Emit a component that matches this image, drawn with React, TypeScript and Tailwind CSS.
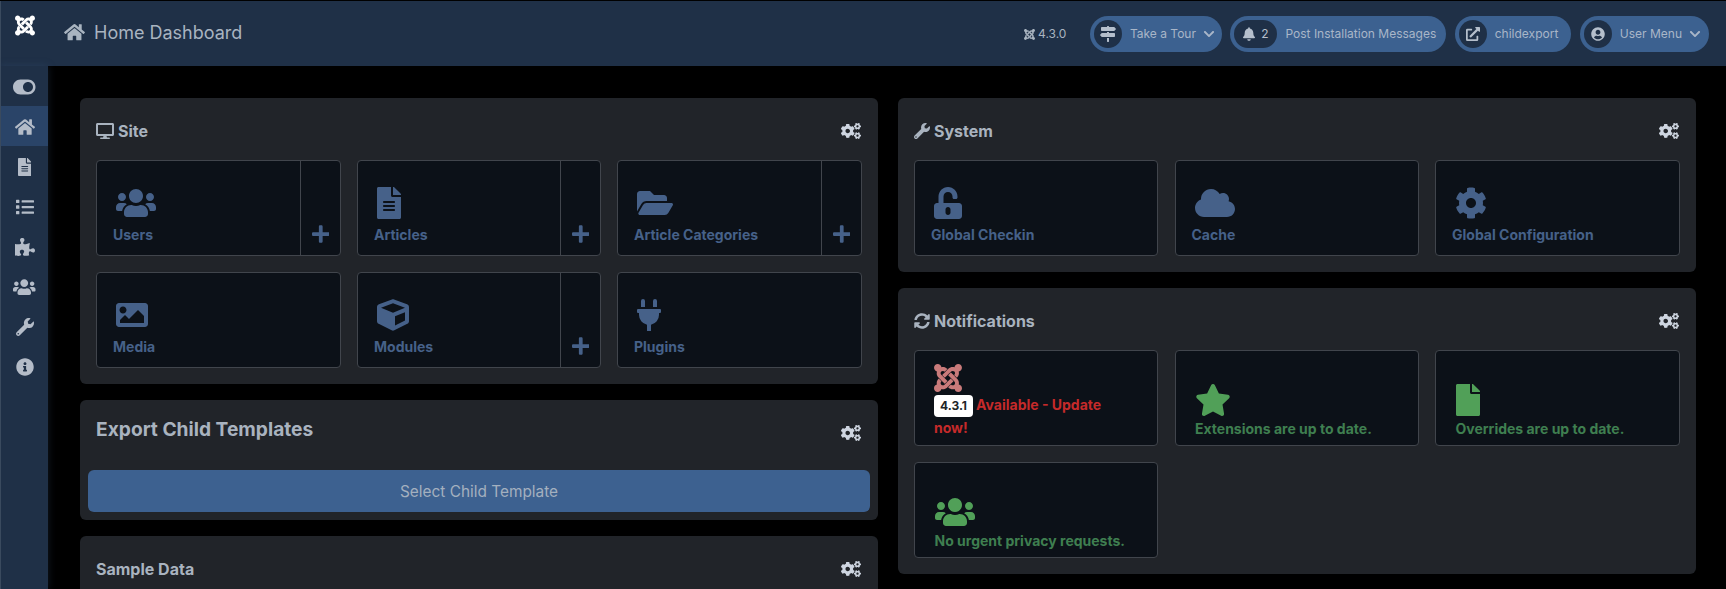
import React from 'react'
import {
  FaBell, FaChevronDown, FaCloud, FaCog, FaCogs, FaCube, FaDesktop, FaExternalLinkAlt, FaFile, FaFileAlt,
  FaFolderOpen, FaHome, FaImage, FaInfoCircle, FaJoomla, FaList, FaMapSigns, FaPlug, FaPlus, FaPuzzlePiece, FaStar,
  FaSyncAlt, FaToggleOn, FaUnlockAlt, FaUserCircle, FaUsers, FaWrench,
} from 'react-icons/fa'

const Gears = () => <FaCogs className='w-5 h-4 mr-px text-[#ced5e0] shrink-0' />

const Panel = ({ icon, title, children }: { icon?: React.ReactNode; title: string; children?: React.ReactNode }) => (
    <section className='bg-[#212429] rounded-md px-4 pb-4'>
        <div className='flex justify-between items-center pt-[21px] pb-[17px] h-[62px]'>
            <h2 className='flex items-center gap-1 text-[16px] leading-6 font-bold text-[#a9b3bf]'>{icon}{title}</h2>
            <Gears />
        </div>
        {children}
    </section>
)

const Card = ({ icon, label, plus }: { icon: React.ReactNode; label: string; plus?: boolean }) => (
    <div className='h-24 flex bg-[#0c1118] border border-[#41454c] rounded text-[#466189]'>
        <div className='flex-1 flex flex-col justify-end pl-4 pb-[10px] min-w-0'>
            <div className='h-8 mb-[5px] ml-[3px] flex items-center text-[32px]'>{icon}</div>
            <div className='text-[14px] leading-[21px] font-bold'>{label}</div>
        </div>
        {plus && (
            <div className='w-10 border-l border-[#41454c] flex items-end justify-center pb-[11px] text-[20px]'>
                <FaPlus className='w-[17.5px]' />
            </div>
        )}
    </div>
)

const NoteCard = ({ icon, label }: { icon: React.ReactNode; label: string }) => (
    <div className='h-24 flex flex-col justify-end bg-[#0c1118] border border-[#41454c] rounded pl-[19.5px] pb-[6px]'>
        <div className='h-8 mb-[2px] flex items-center text-[32px] text-[#51a058]'>{icon}</div>
        <div className='text-[14px] leading-[21px] font-bold text-[#3f7f50]'>{label}</div>
    </div>
)

const Pill = ({ icon, circle, text, chevron, pr }: { icon: React.ReactNode; circle: string; text: string; chevron?: boolean; pr: string }) => (
    <div className={`h-9 flex items-center bg-[#3c6190] rounded-full pl-[4px] ${pr} text-[12px] text-[#a9b6c8]`}>
        <span className={`h-7 ${circle} flex items-center justify-center gap-[6px] rounded-full bg-[#1f3047] text-[#b5bfcc] text-[14px]`}>{icon}</span>
        <span className='ml-2 whitespace-nowrap'>{text}</span>
        {chevron && <FaChevronDown className='ml-[7px] text-[12px]' />}
    </div>
)

const SideItem = ({ children, active }: { children: React.ReactNode; active?: boolean }) => (
    <div className={`h-10 pt-[2px] flex items-center justify-center text-[18px] text-[#b4bcc8] ${active ? 'bg-[#2a4468]' : ''}`}>{children}</div>
)

const App = () => {
    return (
        <div className="h-[589px] overflow-hidden flex flex-col bg-black border-t border-black font-['Inter',sans-serif]">
            <header className='h-[65px] shrink-0 flex items-center bg-[#1f3047] border-l border-[#3a4a5e] pr-[17px]'>
                <div className='w-[47px] flex justify-center pb-[16px]'>
                    <FaJoomla className='w-5 h-[23px] text-white' />
                </div>
                <div className='flex items-center pl-4 text-[#a9b4c0] pb-[2px]'>
                    <FaHome className='w-[21px] h-[18.5px]' />
                    <h1 className='ml-[9px] text-[18px] leading-6'>Home Dashboard</h1>
                </div>
                <div className='ml-auto flex items-center gap-[8.5px] pt-px'>
                    <div className='flex items-center gap-[3px] mr-[15px] text-[12px] text-[#a9b4c0]'>
                        <FaJoomla className='w-[11px] h-[13px]' />4.3.0
                    </div>
                    <Pill icon={<FaMapSigns className='text-[16px]' />} circle='w-7' text='Take a Tour' chevron pr='pr-[7px]' />
                    <Pill icon={<><FaBell className='w-3' /><span className='text-[12px]'>2</span></>} circle='w-[43px]' text='Post Installation Messages' pr='pr-[10px]' />
                    <Pill icon={<FaExternalLinkAlt />} circle='w-7' text='childexport' pr='pr-[13px]' />
                    <Pill icon={<FaUserCircle />} circle='w-7' text='User Menu' chevron pr='pr-2' />
                </div>
            </header>

            <div className='flex-1 flex min-h-0'>
                <nav className='w-12 shrink-0 bg-[#1f3047] border-l border-[#3a4a5e] shadow-[0_0_8px_rgba(60,90,130,0.3)]'>
                    <SideItem><FaToggleOn className='w-[22.5px] h-5' /></SideItem>
                    <SideItem active><FaHome className='w-5' /></SideItem>
                    <SideItem><FaFileAlt className='w-[13.5px]' /></SideItem>
                    <SideItem><FaList /></SideItem>
                    <SideItem><FaPuzzlePiece className='w-5' /></SideItem>
                    <SideItem><FaUsers className='w-[22.5px]' /></SideItem>
                    <SideItem><FaWrench /></SideItem>
                    <SideItem><FaInfoCircle /></SideItem>
                </nav>

                <main className='flex-1 grid grid-cols-2 gap-x-5 items-start pl-8 pr-[30px] pt-8'>
                    <div className='flex flex-col gap-4'>
                        <Panel icon={<FaDesktop className='w-[18px]' />} title='Site'>
                            <div className='grid grid-cols-[245px_244px_245px] gap-x-4 gap-y-4'>
                                <Card icon={<FaUsers className='w-10' />} label='Users' plus />
                                <Card icon={<FaFileAlt className='w-6' />} label='Articles' plus />
                                <Card icon={<FaFolderOpen className='w-9' />} label='Article Categories' plus />
                                <Card icon={<FaImage />} label='Media' />
                                <Card icon={<FaCube />} label='Modules' plus />
                                <Card icon={<FaPlug className='w-6' />} label='Plugins' />
                            </div>
                        </Panel>

                        <section className='bg-[#212429] rounded-md px-2 pb-2'>
                            <div className='flex justify-between items-start px-2 h-[70px] pt-[14px]'>
                                <h2 className='text-[19.2px] leading-[30px] font-bold text-[#a9b3bf]'>Export Child Templates</h2>
                                <div className='pt-[11px]'><Gears /></div>
                            </div>
                            <div className='h-[42px] pt-px flex items-center justify-center rounded-md bg-[#3d6190] text-[15.4px] text-[#a4b0bf]'>Select Child Template</div>
                        </section>

                        <Panel title='Sample Data'>
                            <div className='h-16' />
                        </Panel>
                    </div>

                    <div className='flex flex-col gap-4'>
                        <Panel icon={<FaWrench />} title='System'>
                            <div className='grid grid-cols-[244px_244px_245px] gap-x-[16.5px]'>
                                <Card icon={<FaUnlockAlt className='w-7' />} label='Global Checkin' />
                                <Card icon={<FaCloud className='w-10' />} label='Cache' />
                                <Card icon={<FaCog />} label='Global Configuration' />
                            </div>
                        </Panel>

                        <Panel icon={<FaSyncAlt />} title='Notifications'>
                            <div className='grid grid-cols-[244px_244px_245px] gap-x-[16.5px] gap-y-4'>
                                <div className='h-24 flex flex-col items-start bg-[#0c1118] border border-[#41454c] rounded pl-[19px] pt-[11px]'>
                                    <FaJoomla className='w-7 h-8 text-[#c97a7a]' />
                                    <div className='text-[14px] leading-[21px] font-bold text-[#c52a2a]'>
                                        <span className='inline-block h-[22px] align-middle rounded bg-white px-[6px] mr-[3px] text-[12px] leading-[22px] font-bold text-[#212529]'>4.3.1</span>
                                        Available - Update<br />now!
                                    </div>
                                </div>
                                <NoteCard icon={<FaStar className='w-9' />} label='Extensions are up to date.' />
                                <NoteCard icon={<FaFile className='w-6' />} label='Overrides are up to date.' />
                                <NoteCard icon={<FaUsers className='w-10' />} label='No urgent privacy requests.' />
                            </div>
                        </Panel>
                    </div>
                </main>
            </div>
        </div>
    )
}

export default App
